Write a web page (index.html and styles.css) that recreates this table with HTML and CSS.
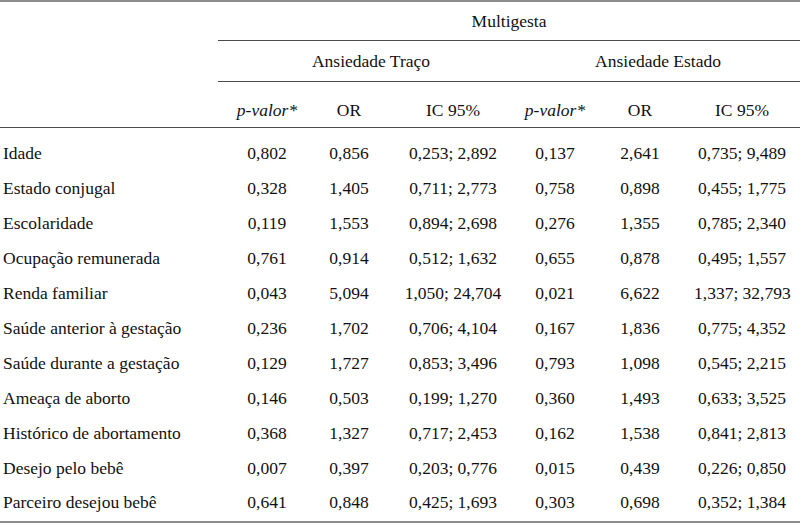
FILE: index.html
```html
<!DOCTYPE html>
<html lang="pt">
<head>
<meta charset="utf-8">
<link rel="stylesheet" href="styles.css">
</head>
<body>
<table class="tbl">
  <colgroup>
    <col class="c-label"><col class="c1"><col class="c2"><col class="c3"><col class="c4"><col class="c5"><col class="c6">
  </colgroup>
  <thead>
    <tr class="h1">
      <th class="blank"></th>
      <th colspan="6" class="ruled">Multigesta</th>
    </tr>
    <tr class="h2">
      <th class="blank"></th>
      <th colspan="3" class="ruled">Ansiedade Traço</th>
      <th colspan="3" class="ruled group-right">Ansiedade Estado</th>
    </tr>
    <tr class="h3">
      <th class="blank"></th>
      <th><i>p-valor*</i></th>
      <th>OR</th>
      <th>IC 95%</th>
      <th><i>p-valor*</i></th>
      <th>OR</th>
      <th>IC 95%</th>
    </tr>
  </thead>
  <tbody>
    <tr class="first"><td>Idade</td><td>0,802</td><td>0,856</td><td>0,253; 2,892</td><td>0,137</td><td>2,641</td><td>0,735; 9,489</td></tr>
    <tr><td>Estado conjugal</td><td>0,328</td><td>1,405</td><td>0,711; 2,773</td><td>0,758</td><td>0,898</td><td>0,455; 1,775</td></tr>
    <tr><td>Escolaridade</td><td>0,119</td><td>1,553</td><td>0,894; 2,698</td><td>0,276</td><td>1,355</td><td>0,785; 2,340</td></tr>
    <tr><td>Ocupação remunerada</td><td>0,761</td><td>0,914</td><td>0,512; 1,632</td><td>0,655</td><td>0,878</td><td>0,495; 1,557</td></tr>
    <tr><td>Renda familiar</td><td>0,043</td><td>5,094</td><td>1,050; 24,704</td><td>0,021</td><td>6,622</td><td>1,337; 32,793</td></tr>
    <tr><td>Saúde anterior à gestação</td><td>0,236</td><td>1,702</td><td>0,706; 4,104</td><td>0,167</td><td>1,836</td><td>0,775; 4,352</td></tr>
    <tr><td>Saúde durante a gestação</td><td>0,129</td><td>1,727</td><td>0,853; 3,496</td><td>0,793</td><td>1,098</td><td>0,545; 2,215</td></tr>
    <tr><td>Ameaça de aborto</td><td>0,146</td><td>0,503</td><td>0,199; 1,270</td><td>0,360</td><td>1,493</td><td>0,633; 3,525</td></tr>
    <tr><td>Histórico de abortamento</td><td>0,368</td><td>1,327</td><td>0,717; 2,453</td><td>0,162</td><td>1,538</td><td>0,841; 2,813</td></tr>
    <tr><td>Desejo pelo bebê</td><td>0,007</td><td>0,397</td><td>0,203; 0,776</td><td>0,015</td><td>0,439</td><td>0,226; 0,850</td></tr>
    <tr class="last"><td>Parceiro desejou bebê</td><td>0,641</td><td>0,848</td><td>0,425; 1,693</td><td>0,303</td><td>0,698</td><td>0,352; 1,384</td></tr>
  </tbody>
</table>
</body>
</html>
```
FILE: styles.css
```css
html, body {
  margin: 0;
  padding: 0;
  background: #ffffff;
  font-family: "Liberation Serif", "Times New Roman", serif;
}

.tbl {
  width: 800px;
  table-layout: fixed;
  border-collapse: separate;
  border-spacing: 0;
  font-family: "Liberation Serif", "Times New Roman", serif;
  font-size: 17.5px;
  color: #111111;
  border-top: 2px solid #8c8c8c;
}

.c-label { width: 218px; }
.c1 { width: 98px; }
.c2 { width: 66px; }
.c3 { width: 142px; }
.c4 { width: 62px; }
.c5 { width: 108px; }
.c6 { width: 106px; }

.tbl th {
  font-weight: normal;
  text-align: center;
  padding: 0;
  line-height: 20px;
  vertical-align: middle;
}

.tbl th.ruled {
  border-bottom: 1px solid #4a4a4a;
}

.tbl th.group-right {
  padding-right: 8px;
}

.h1 th { height: 38px; }
.h2 th { height: 40px; }

.h3 th {
  height: 46px;
  box-sizing: border-box;
  padding-top: 11px;
  border-bottom: 1px solid #4a4a4a;
}

.h3 th:last-child {
  padding-right: 10px;
}

.h3 th i { font-style: italic; }

.tbl td {
  padding: 0;
  height: 35px;
  line-height: 20px;
  text-align: center;
  vertical-align: middle;
  white-space: nowrap;
}

.tbl td:first-child {
  text-align: left;
  padding-left: 3px;
}

.tbl td:last-child {
  padding-right: 10px;
}

.tbl tr.first td {
  box-sizing: border-box;
  height: 42px;
  padding-top: 7px;
}

.tbl tr.last td {
  box-sizing: border-box;
  height: 38px;
  padding-bottom: 3px;
  border-bottom: 2px solid #8c8c8c;
}
```
